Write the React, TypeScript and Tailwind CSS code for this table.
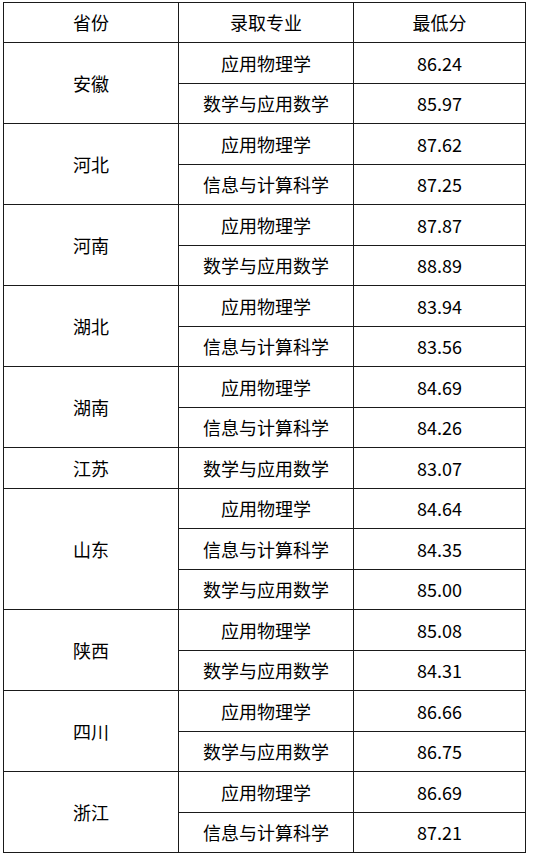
const data: { province: string; rows: [string, string][] }[] = [
  { province: '安徽', rows: [['应用物理学', '86.24'], ['数学与应用数学', '85.97']] },
  { province: '河北', rows: [['应用物理学', '87.62'], ['信息与计算科学', '87.25']] },
  { province: '河南', rows: [['应用物理学', '87.87'], ['数学与应用数学', '88.89']] },
  { province: '湖北', rows: [['应用物理学', '83.94'], ['信息与计算科学', '83.56']] },
  { province: '湖南', rows: [['应用物理学', '84.69'], ['信息与计算科学', '84.26']] },
  { province: '江苏', rows: [['数学与应用数学', '83.07']] },
  {
    province: '山东',
    rows: [
      ['应用物理学', '84.64'],
      ['信息与计算科学', '84.35'],
      ['数学与应用数学', '85.00'],
    ],
  },
  { province: '陕西', rows: [['应用物理学', '85.08'], ['数学与应用数学', '84.31']] },
  { province: '四川', rows: [['应用物理学', '86.66'], ['数学与应用数学', '86.75']] },
  { province: '浙江', rows: [['应用物理学', '86.69'], ['信息与计算科学', '87.21']] },
];

const cell = 'border border-[#1a1a1a] text-center align-middle p-0';

export default function App() {
  return (
    <div
      className="min-h-[861px] bg-white pl-[3px] pt-[2px] text-[18px] text-black"
      style={{ fontFamily: '"Noto Sans CJK SC", "Noto Sans", sans-serif' }}
    >
      <table className="w-[522px] table-fixed border-collapse">
        <colgroup>
          <col className="w-[175px]" />
          <col className="w-[175px]" />
          <col className="w-[172px]" />
        </colgroup>
        <thead>
          <tr className="h-[40.4px]">
            <th className={`${cell} font-normal`}>省份</th>
            <th className={`${cell} font-normal`}>录取专业</th>
            <th className={`${cell} font-normal`}>最低分</th>
          </tr>
        </thead>
        <tbody>
          {data.map((group) =>
            group.rows.map(([major, score], i) => (
              <tr key={group.province + major} className="h-[40.5px]">
                {i === 0 && (
                  <td className={cell} rowSpan={group.rows.length}>
                    {group.province}
                  </td>
                )}
                <td className={cell}>{major}</td>
                <td className={cell}>{score}</td>
              </tr>
            ))
          )}
        </tbody>
      </table>
    </div>
  );
}
